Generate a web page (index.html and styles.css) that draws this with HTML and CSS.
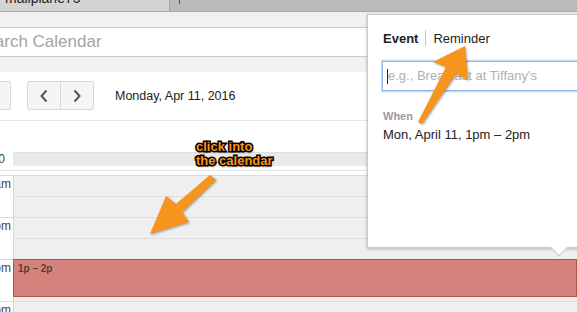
FILE: index.html
```html
<!DOCTYPE html>
<html lang="en">
	<head>
		<meta charset="UTF-8" />
		<title>Calendar</title>
		<link rel="stylesheet" href="styles.css">
	</head>

	<body>
		<div class="topbar">
			<div class="tab"><span class="tab-title">mailplane75</span></div>
			<div class="tab-rest"><span class="tick"></span></div>
		</div>

		<div class="search-area">
			<div class="search">Search Calendar</div>
		</div>

		<div class="toolbar">
			<div class="btn today">Today</div>
			<div class="nav">
				<div class="btn nav-btn prev">
					<svg width="10" height="14" viewBox="0 0 10 14"><polyline points="7.5,1.5 2.5,7 7.5,12.5" fill="none" stroke="#555" stroke-width="2"/></svg>
				</div>
				<div class="btn nav-btn next">
					<svg width="10" height="14" viewBox="0 0 10 14"><polyline points="2.5,1.5 7.5,7 2.5,12.5" fill="none" stroke="#555" stroke-width="2"/></svg>
				</div>
			</div>
			<div class="date">Monday, Apr 11, 2016</div>
		</div>

		<div class="allday">
			<div class="tz">GMT+10</div>
			<div class="allday-bar"></div>
		</div>

		<div class="grid">
			<div class="row">
				<div class="hour">11am</div>
				<div class="slot"><div class="half"></div></div>
			</div>
			<div class="row">
				<div class="hour">12pm</div>
				<div class="slot"><div class="half"></div></div>
			</div>
			<div class="row">
				<div class="hour">1pm</div>
				<div class="slot">
					<div class="event">1p – 2p</div>
				</div>
			</div>
			<div class="row">
				<div class="hour">2pm</div>
				<div class="slot"><div class="half"></div></div>
			</div>
		</div>

		<div class="popup">
			<div class="popup-tabs">
				<span class="ptab active">Event</span>
				<span class="ptab-sep"></span>
				<span class="ptab">Reminder</span>
			</div>
			<div class="popup-input"><span class="caret"></span>e.g., Breakfast at Tiffany's</div>
			<div class="when-label">When</div>
			<div class="when-value">Mon, April 11, 1pm – 2pm</div>
			<div class="popup-tail"></div>
		</div>

		<svg class="arrows" width="577" height="312" viewBox="0 0 577 312">
			<polygon points="210,175 176,204 166,196 150,234 189,222 182,212 216,180" />
			<polygon points="465,46 468,80 456,74 422,124 418,122 446,67 433,62" />
		</svg>
		<div class="note">click into<br>the calendar</div>
	</body>
</html>
```

FILE: styles.css
```css
* {
	box-sizing: border-box;
}

body {
	margin: 0;
	width: 577px;
	height: 312px;
	overflow: hidden;
	position: relative;
	background: #fff;
	font-family: 'Liberation Sans', Arial, sans-serif;
	color: #222;
}

/* window tab strip */
.topbar {
	display: flex;
	height: 12px;
	border-bottom: 1px solid #a9a9a9;
	overflow: hidden;
}
.tab {
	width: 170px;
	background: #d4d4d4;
	border-right: 1px solid #a3a3a3;
	padding-left: 5px;
	overflow: hidden;
}
.tab-title {
	display: block;
	margin-top: -9px;
	font-size: 14px;
	line-height: 14px;
	color: #222;
}
.tab-rest {
	flex: 1;
	background: #bbbbbb;
}
.tick {
	display: block;
	margin-left: 9px;
	width: 1px;
	height: 4px;
	background: #555;
}

/* search */
.search-area {
	background: #f1f1f1;
	padding: 15px 0;
}
.search {
	margin-left: -40px;
	width: 420px;
	height: 30px;
	background: #fff;
	border: 1px solid #cbcbcb;
	padding-left: 13px;
	font-size: 17px;
	line-height: 28px;
	color: #a3a3a3;
}

/* toolbar */
.toolbar {
	display: flex;
	align-items: center;
	padding: 9px 0 10px;
	border-bottom: 1px solid #e6e6e6;
}
.btn {
	height: 29px;
	background: #f5f5f5;
	border: 1px solid #d9d9d9;
	border-radius: 2px;
	font-size: 12px;
	display: flex;
	align-items: center;
	justify-content: center;
	color: #444;
}
.today {
	margin-left: -50px;
	width: 61px;
}
.nav {
	display: flex;
	margin-left: 16px;
}
.nav-btn {
	width: 34px;
}
.prev {
	border-radius: 2px 0 0 2px;
}
.next {
	margin-left: -1px;
	border-radius: 0 2px 2px 0;
}
.date {
	margin-left: 21px;
	font-size: 12.5px;
	color: #222;
}

/* all day row */
.allday {
	display: flex;
	align-items: center;
	padding: 31px 0 4px;
	border-bottom: 1px solid #e3e3e3;
}
.tz {
	width: 13px;
	overflow: hidden;
	direction: rtl;
	padding-right: 8px;
	font-size: 12px;
	color: #444;
	white-space: nowrap;
}
.allday-bar {
	flex: 1;
	height: 14px;
	background: #e9e9e9;
	border-top: 1px solid #e0e0e0;
}

/* day grid */
.grid {
	margin-top: 4px;
}
.row {
	display: flex;
	height: 42px;
	border-top: 1px solid #dcdcdc;
}
.hour {
	width: 13px;
	overflow: hidden;
	direction: rtl;
	white-space: nowrap;
	padding: 1px 2px 0 0;
	font-size: 12px;
	line-height: 14px;
	color: #444;
	background: #fff;
}
.slot {
	flex: 1;
	background: #efefef;
	border-left: 1px solid #d6d6d6;
}
.half {
	margin-top: 20px;
	border-top: 1px dotted #cfcfcf;
}
.event {
	margin: -1px 0 0 -1px;
	height: 38px;
	background: #d6827c;
	border: 1px solid #a95a41;
	padding: 3px 0 0 4px;
	font-size: 10px;
	font-weight: bold;
	line-height: 12px;
	color: #5e3a36;
}

/* quick add popup */
.popup {
	position: absolute;
	left: 367px;
	top: 14px;
	width: 240px;
	height: 234px;
	background: #fff;
	border: 1px solid #c9c9c9;
	box-shadow: 0 1px 3px rgba(0, 0, 0, 0.25);
	padding: 15px 0 0 15px;
}
.popup-tabs {
	display: flex;
	align-items: center;
	font-size: 13px;
	line-height: 15px;
}
.ptab {
	color: #222;
}
.ptab.active {
	font-weight: bold;
}
.ptab-sep {
	width: 1px;
	height: 16px;
	background: #c4c4c4;
	margin: 0 7px;
}
.popup-input {
	margin: 15px 0 0 -1px;
	height: 30px;
	border: 1px solid #8fb5e6;
	box-shadow: 0 0 1px 1px #c3d9f4;
	padding-left: 4px;
	font-size: 13px;
	line-height: 28px;
	color: #b0b0b0;
	display: flex;
	align-items: center;
}
.caret {
	width: 1px;
	height: 15px;
	background: #222;
}
.when-label {
	margin-top: 19px;
	font-size: 11px;
	font-weight: bold;
	line-height: 13px;
	color: #9a9a9a;
}
.when-value {
	margin-top: 4px;
	font-size: 13px;
	line-height: 15px;
	color: #222;
}
.popup-tail {
	position: absolute;
	left: 185px;
	bottom: -7px;
	width: 12px;
	height: 12px;
	background: #fff;
	border-right: 1px solid #c9c9c9;
	border-bottom: 1px solid #c9c9c9;
	transform: rotate(45deg);
}

/* annotation overlay */
.arrows {
	position: absolute;
	left: 0;
	top: 0;
	pointer-events: none;
	filter: drop-shadow(1px 1px 1px rgba(0, 0, 0, 0.35));
}
.arrows polygon {
	fill: #f7941d;
}
.note {
	position: absolute;
	left: 196px;
	top: 140px;
	font-size: 13px;
	font-weight: bold;
	line-height: 14px;
	color: #f7941d;
	-webkit-text-stroke: 3px #000;
	paint-order: stroke fill;
	text-shadow: 1px 2px 2px rgba(0, 0, 0, 0.4);
}
```
